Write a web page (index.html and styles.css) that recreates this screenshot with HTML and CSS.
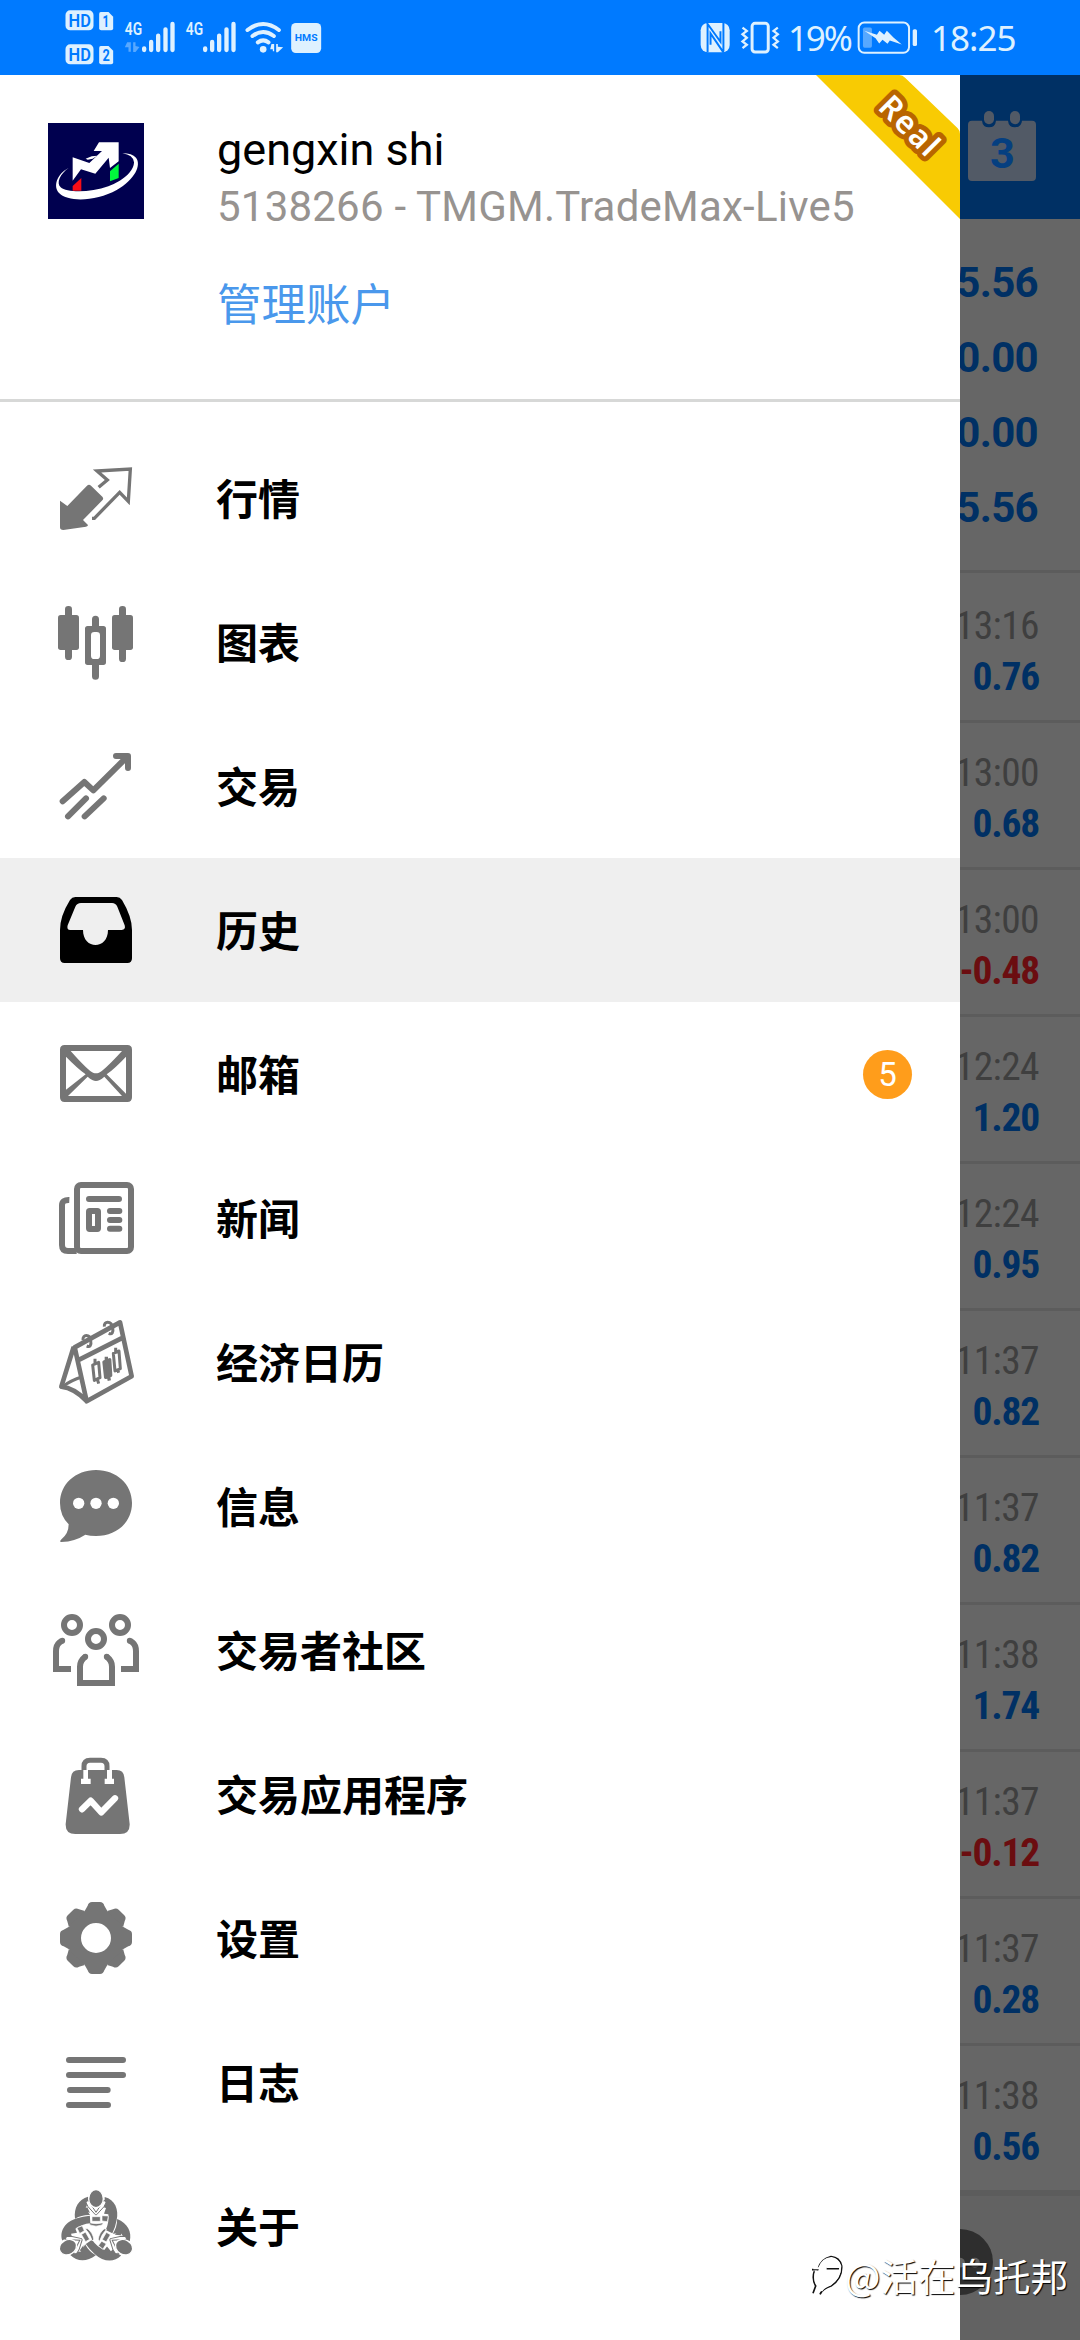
FILE: index.html
```
<!DOCTYPE html>
<html lang="zh-CN">
<head>
<meta charset="utf-8">
<title>历史</title>
<link rel="stylesheet" href="styles.css">
</head>
<body>
<div class="screen">
  <header class="status">
    <svg class="status-left" viewBox="60 0 800 225">
      <g fill="#def1ff">
        <rect x="76" y="31" width="84" height="60" rx="14"/><path d="M182 36H205L219 50V85Q219 91 213 91H183Q177 91 177 85V42Q177 36 182 36Z"/>
        <rect x="76" y="133" width="84" height="60" rx="14"/><path d="M182 138H205L219 152V187Q219 193 213 193H183Q177 193 177 187V144Q177 138 182 138Z"/>
        <text x="254" y="106" class="st net" textLength="52" lengthAdjust="spacingAndGlyphs">4G</text>
        <text x="437" y="106" class="st net" textLength="52" lengthAdjust="spacingAndGlyphs">4G</text>
        <path d="M694 132L690 148H698V154H702V132ZM708 132H713V140L729 142L713 157H708Z"/>
        <circle cx="669" cy="148" r="10"/>
        <rect x="753" y="69" width="90" height="90" rx="14"/>
      </g>
      <g fill="#007aff">
        <text x="85" y="81" class="st hd" textLength="67" lengthAdjust="spacingAndGlyphs">HD</text>
        <text x="187" y="81" class="st num" textLength="20" lengthAdjust="spacingAndGlyphs">1</text>
        <text x="85" y="183" class="st hd" textLength="67" lengthAdjust="spacingAndGlyphs">HD</text>
        <text x="187" y="183" class="st num" textLength="22" lengthAdjust="spacingAndGlyphs">2</text>
        <text x="764" y="123" class="st hms" textLength="68" lengthAdjust="spacingAndGlyphs">HMS</text>
      </g>
      <path d="M261 127L254 142H265V155H272V127ZM279 127H286V138L298 141L286 156H279Z" fill="#58a8ff"/>
      <g stroke="#def1ff" stroke-width="13" stroke-linecap="round" fill="none">
        <path d="M312 145V150M333 126V150M354 107V150M376 88V150M397 72V150"/>
        <path d="M495 145V150M516 126V150M537 107V150M559 88V150M580 72V150"/>
        <path d="M622 90Q669 54 716 90M637 108Q669 84 701 108M653 127Q669 115 685 127" stroke-width="12"/>
      </g>
    </svg>
    <div class="status-right">
      <svg class="nfc" viewBox="60 60 94 100">
        <rect x="62" y="66" width="88" height="89" rx="22" fill="#def1ff"/>
        <path d="M81 66L122 123V91M131 155L92 98V132M83 70V155M131 66V152" stroke="#007aff" stroke-width="6" fill="none"/>
      </svg>
      <svg class="vibrate" viewBox="180 60 120 100" fill="none" stroke="#def1ff" stroke-width="7">
        <rect x="216" y="67" width="49" height="87" rx="9" stroke-width="9"/>
        <path d="M187 80L200 90L187 100L200 111L187 122L200 132L187 142M294 80L281 90L294 100L281 111L294 122L281 132L294 142"/>
      </svg>
      <span class="pct">19%</span>
      <svg class="battery" viewBox="534 60 184 104">
        <rect x="539" y="67" width="152" height="91" rx="17" fill="none" stroke="#def1ff" stroke-width="6"/>
        <rect x="552" y="82" width="27" height="61" rx="5" fill="#57a8ff"/>
        <rect x="702" y="87" width="13" height="51" rx="5" fill="#def1ff"/>
        <path d="M556 92L594 104L602 92L616 104L624 92L644 112L669 133L633 121L626 131L611 119L601 130L590 114Z" fill="#def1ff"/>
      </svg>
      <span class="clock">18:25</span>
    </div>
  </header>

  <div class="main">
    <aside class="drawer">
      <section class="account">
        <svg class="avatar" viewBox="144 99 288 288">
          <rect x="144" y="99" width="288" height="288" fill="#00004f"/>
          <path d="M206 234C170 252 158 290 178 310C205 337 290 334 350 300C405 268 425 225 408 203Q396 190 367 190Q400 195 402 217C402 245 365 275 325 289C270 309 200 308 182 292C168 278 180 252 206 234Z" fill="#fff"/>
          <path d="M218 302V288L244 264V302Z" fill="#f80d16"/>
          <path d="M330 274V244L356 221V264Z" fill="#00f73c"/>
          <path d="M218 202L268 219L306 183H281L297 157H356V214L330 234L326 203L286 251L243 238L218 272Z" fill="#fff"/>
          <path d="M257 206L275 199L292 197L278 206L263 209Z" fill="#fff"/>
        </svg>
        <div class="who">
          <div class="name">gengxin shi</div>
          <div class="login">5138266 - TMGM.TradeMax-Live5</div>
          <a class="manage">管理账户</a>
        </div>
        <svg class="ribbon" viewBox="405 225 435 432">
          <path d="M408 225H658Q668 225 676 234L833 385Q840 392 840 402V657Z" fill="#f8cb03"/>
          <text class="real" transform="translate(590 325) rotate(45)" textLength="212">Real</text>
        </svg>
      </section>

      <nav class="menu">
        <a class="item"><svg class="icon" viewBox="144 30 288 288"><path d="M180 182L202 198L261 137Q267 132 273 137L307 170Q312 176 307 181L249 240L264 255Q264 259 258 260L190 270Q180 270 180 262Z" fill="#757575"/><path d="M296 142L322 120L291 93L391 87L385 184L359 157L283 235H276" fill="none" stroke="#757575" stroke-width="10"/></svg><span>行情</span></a>
        <a class="item"><svg class="icon" viewBox="144 462 288 288" fill="#757575"><rect x="174" y="525" width="63" height="105" rx="8"/><rect x="195" y="498" width="21" height="162" rx="10"/><rect x="336" y="525" width="63" height="105" rx="8"/><rect x="357" y="498" width="21" height="168" rx="10"/><path d="M276 558V538a10.500 10.500 0 0 1 21 0V558H310Q318 558 318 566V667Q318 675 310 675H297V709a10.500 10.500 0 0 1-21 0V675H263Q255 675 255 667V566Q255 558 263 558ZM283 576Q273 576 273 586V647Q273 657 283 657H290Q300 657 300 647V586Q300 576 290 576Z" fill-rule="evenodd"/></svg><span>图表</span></a>
        <a class="item"><svg class="icon" viewBox="144 894 288 288" fill="none" stroke="#757575" stroke-width="18" stroke-linecap="round" stroke-linejoin="round"><path d="M188 1084L253 1026L280 1051L381 951M348 948H384V984"/><path d="M204 1129L258 1075M254 1129L311 1075"/></svg><span>交易</span></a>
        <a class="item active"><svg class="icon" viewBox="144 96 288 288"><path d="M226 141H350Q360 141 366 150Q396 200 396 240V325Q396 339 382 339H194Q180 339 180 325V240Q180 198 210 150Q216 141 226 141ZM243 159Q231 159 226 170L203 226Q199 240 211 240H249C249 300 324 300 324 240H365Q378 239 374 226L352 170Q347 159 336 159Z" fill-rule="evenodd"/></svg><span>历史</span></a>
        <a class="item"><svg class="icon" viewBox="144 528 288 288"><path d="M194 585H382Q396 585 396 599V742Q396 756 382 756H194Q180 756 180 742V599Q180 585 194 585ZM212 603Q265 663 281 669Q288 671 295 669Q311 663 366 603ZM198 620V719L257 673Q232 655 198 620ZM378 620Q345 655 320 673L378 731ZM313 680Q298 693 288 693Q278 693 263 680L204 738H366Z" fill="#757575" fill-rule="evenodd"/></svg><span>邮箱</span><b class="badge">5</b></a>
        <a class="item"><svg class="icon" viewBox="144 960 288 288" fill="none" stroke="#757575" stroke-width="18"><rect x="231" y="1005" width="162" height="198" rx="12"/><path d="M208 1050Q186 1049 186 1066V1185Q186 1203 204 1203H230"/><path d="M267 1047H357M330 1083H358M330 1110H358M330 1136H358" stroke-linecap="round"/><rect x="267" y="1083" width="27" height="54" rx="2"/></svg><span>新闻</span></a>
        <a class="item"><svg class="icon" viewBox="144 132 288 288" fill="none" stroke="#757575" stroke-width="14" stroke-linejoin="round"><path d="M224 232L360 157L395 319L260 394ZM238 269L370 202M221 231L184 350Q222 354 260 393"/><path d="M187 350Q215 330 245 321" stroke-width="9"/><path d="M249 210C247 192 270 192 272 211C275 226 270 232 260 228M313 170C311 152 334 152 338 172C341 188 336 194 326 190" stroke-width="9"/><path d="M278 285L296 277L300 323L283 331ZM285 282V266M292 327L296 341M340 250L357 243L361 296L345 303ZM347 247V233M353 299L356 308" stroke-width="9"/><path d="M312 276L329 269L332 316L317 322ZM319 276V260M325 316L328 332" fill="#757575" stroke-width="10"/></svg><span>经济日历</span></a>
        <a class="item"><svg class="icon" viewBox="144 564 288 288"><path d="M288 600C350 600 396 643 396 699C396 757 350 798 288 798Q270 798 256 794Q226 814 184 816Q177 816 183 809Q206 792 206 763Q180 737 180 699C180 643 226 600 288 600Z" fill="#757575"/><g fill="#fff"><circle cx="236" cy="700" r="17"/><circle cx="288" cy="700" r="17"/><circle cx="340" cy="700" r="17"/></g></svg><span>信息</span></a>
        <a class="item"><svg class="icon" viewBox="144 96 288 288" fill="none" stroke="#757575" stroke-width="18"><circle cx="216" cy="165" r="24"/><circle cx="360" cy="165" r="24"/><circle cx="288" cy="207" r="24"/><path d="M213 297H168V244Q168 226 178 218L186 212M363 297H408V244Q408 226 398 218L390 212M256 260Q240 272 240 290V339H336V290Q336 272 320 260"/><g fill="#757575" stroke="none"><circle cx="187" cy="212" r="8.500"/><circle cx="389" cy="212" r="8.500"/><circle cx="256" cy="260" r="8.500"/><circle cx="320" cy="260" r="8.500"/></g></svg><span>交易者社区</span></a>
        <a class="item"><svg class="icon" viewBox="144 528 288 288"><path d="M237 600H350Q371 600 373 622L389 762Q390 792 360 792H226Q196 792 197 762L213 622Q215 600 237 600Z" fill="#757575"/><path d="M252 602V589Q252 571 270 571H303Q321 571 321 589V602" fill="none" stroke="#757575" stroke-width="15"/><path d="M250 600H264V626H272V642H243V626H250ZM321 600H336V626H342V642H314V626H321Z" fill="#fff"/><path d="M246 718L272 692L304 727L345 685" fill="none" stroke="#fff" stroke-width="19" stroke-linecap="round" stroke-linejoin="round"/></svg><span>交易应用程序</span></a>
        <a class="item"><svg class="icon" viewBox="-144 -144 288 288" fill="#757575"><defs><path id="tooth" d="M-34 -81L-25 -97Q-22 -108 -12 -108H12Q22 -108 25 -97L34 -81Z"/></defs><circle r="66" fill="none" stroke="#757575" stroke-width="42"/><use href="#tooth"/><use href="#tooth" transform="rotate(45)"/><use href="#tooth" transform="rotate(90)"/><use href="#tooth" transform="rotate(135)"/><use href="#tooth" transform="rotate(180)"/><use href="#tooth" transform="rotate(225)"/><use href="#tooth" transform="rotate(270)"/><use href="#tooth" transform="rotate(315)"/></svg><span>设置</span></a>
        <a class="item"><svg class="icon" viewBox="144 492 288 288" stroke="#757575" stroke-width="18" stroke-linecap="round"><path d="M207 570H369M207 615H369M210 660H323M207 705H324"/></svg><span>日志</span></a>
        <a class="item"><svg class="icon" viewBox="144 924 288 288" fill="#757575"><defs><g id="trader"><path d="M264 980C236 988 221 1012 225 1046Q246 1034 270 1035L264 1026L270 1029L262 1012L257 1014L266 994Z"/><path d="M314 981C345 988 357 1020 350 1050Q346 1072 337 1090L317 1080Q328 1058 325 1033L312 1031L318 1014L311 1012L314 996Z"/><path d="M258 998L264 990L288 1027L312 990L318 998L312 1010L290 1034H286L264 1010Z" fill="#fff" stroke="#757575" stroke-width="3"/><ellipse cx="288" cy="986" rx="22" ry="27" stroke="#fff" stroke-width="4"/><path d="M276 1040H301V1054H276ZM268 1058Q288 1064 310 1058L306 1065Q288 1072 270 1065ZM306 1037L325 1038L322 1055L306 1053Z" stroke="#fff" stroke-width="2"/></g></defs><use href="#trader"/><use href="#trader" transform="rotate(120 288 1083)"/><use href="#trader" transform="rotate(240 288 1083)"/></svg><span>关于</span></a>
      </nav>
    </aside>

    <section class="history">
      <div class="bar">
        <svg class="calendar" viewBox="864 330 204 213"><path d="M876 362H906Q908 382 927 382Q946 382 948 362H984Q986 382 1005 382Q1024 382 1026 362H1056Q1068 362 1068 374V531Q1068 543 1056 543H876Q864 543 864 531V374Q864 362 876 362Z" fill="#525a66"/><rect x="912" y="333" width="30" height="40" rx="15" fill="#525a66"/><rect x="990" y="333" width="30" height="40" rx="15" fill="#525a66"/><text x="967" y="505" class="day">3</text></svg>
      </div>
      <div class="summary"><b>5.56</b><b>0.00</b><b>0.00</b><b>5.56</b></div>
      <div class="deals">
        <div class="deal"><span>13:16</span><b>0.76</b></div>
        <div class="deal"><span>13:00</span><b>0.68</b></div>
        <div class="deal"><span>13:00</span><b class="loss">-0.48</b></div>
        <div class="deal"><span>12:24</span><b>1.20</b></div>
        <div class="deal"><span>12:24</span><b>0.95</b></div>
        <div class="deal"><span>11:37</span><b>0.82</b></div>
        <div class="deal"><span>11:37</span><b>0.82</b></div>
        <div class="deal"><span>11:38</span><b>1.74</b></div>
        <div class="deal"><span>11:37</span><b class="loss">-0.12</b></div>
        <div class="deal"><span>11:37</span><b>0.28</b></div>
        <div class="deal"><span>11:38</span><b>0.56</b></div>
      </div>
      <div class="tabs"><svg class="chat" viewBox="540 296 100 200"><circle cx="540" cy="396" r="100" fill="#2e2e2e"/><circle cx="540" cy="398" r="15" fill="#626262"/><circle cx="585" cy="398" r="15" fill="#626262"/></svg></div>
    </section>
  </div>

  <div class="watermark">
    <svg class="mark" viewBox="84 396 108 126" fill="none"><g stroke="#111" stroke-width="5"><path d="M93 443H110Q120 410 150 404Q176 406 182 432Q184 470 150 492Q125 500 117 517M137 440H182M100 448Q92 470 104 492L96 514"/></g><path d="M97 439H114Q124 410 151 408Q172 412 178 432Q178 466 148 488Q127 496 121 507M137 435H178M106 446Q98 470 108 488" stroke="#fff" stroke-width="6"/></svg>
    <span>@活在乌托邦</span>
  </div>
</div>
</body>
</html>
```
FILE: styles.css
```
* { box-sizing: border-box; }
body { margin: 0; background: #fff; font-family: Roboto, "Noto Sans CJK SC", sans-serif; }
svg { display: block; flex: none; }
.screen { position: relative; width: 1080px; height: 2340px; overflow: hidden; display: flex; flex-direction: column; }

/* status bar */
.status { height: 75px; background: #007aff; display: flex; justify-content: space-between; padding: 0 64px 0 60px; color: #def1ff; }
.status-left { width: 267px; height: 75px; }
.st { font-family: Roboto, sans-serif; font-weight: 600; }
.hd { font-size: 54px; }
.num { font-weight: 700; font-size: 50px; }
.net { font-size: 54px; }
.hms { font-size: 29px; font-weight: 700; }
.status-right { display: flex; align-items: center; width: 316px; font-family: "Noto Sans", sans-serif; line-height: 75px; }
.nfc { width: 31px; height: 33px; }
.vibrate { width: 40px; height: 33px; margin-left: 9px; }
.pct { width: 64px; margin-left: 8px; font-size: 35px; letter-spacing: -2.2px; white-space: nowrap; }
.battery { width: 61px; height: 35px; margin-left: 5px; }
.clock { margin-left: 13px; font-size: 35px; letter-spacing: -1px; }

.main { flex: 1; display: flex; min-height: 0; }
.drawer { width: 960px; background: #fff; display: flex; flex-direction: column; }

/* account header */
.account { position: relative; height: 327px; border-bottom: 3px solid #d7d8d7; padding: 48px 0 0 48px; display: flex; }
.avatar { width: 96px; height: 96px; }
.who { margin-left: 73px; display: flex; flex-direction: column; align-items: flex-start; white-space: nowrap; }
.name { font-size: 45px; line-height: 54px; color: #000; }
.login { font-size: 42px; line-height: 60px; letter-spacing: 0.22px; color: #979390; }
.manage { margin-top: 37px; font-size: 44.5px; line-height: 64px; color: #4a98ec; }
.ribbon { position: absolute; top: 0; right: 0; width: 145px; height: 144px; }
.real { font-family: "Noto Sans", sans-serif; font-weight: 600; font-size: 94px; fill: #fff; stroke: #b96500; stroke-width: 30px; stroke-linejoin: round; paint-order: stroke; }

/* menu */
.menu { padding-top: 24px; display: flex; flex-direction: column; }
.item { height: 144px; display: flex; align-items: center; padding: 0 48px; font-size: 42px; font-weight: 700; color: #000; }
.item span { margin-left: 72px; padding-top: 6px; line-height: 60px; }
.active { background: #efefef; }
.icon { width: 96px; height: 96px; }
.badge { margin-left: auto; width: 49px; height: 49px; border-radius: 50%; background: #ff9d1b; color: #fff; font-size: 33px; font-weight: 400; line-height: 49px; text-align: center; }

/* dimmed history page */
.history { width: 120px; background: #666; overflow: hidden; display: flex; flex-direction: column; }
.bar { height: 144px; background: #003064; padding: 35px 0 0 8px; }
.calendar { width: 68px; height: 71px; }
.day { font-size: 130px; font-weight: 700; text-anchor: middle; fill: #053f80; }
.summary { height: 354px; padding: 26px 42px 0 0; border-bottom: 3px solid #5c5c5c; display: flex; flex-direction: column; align-items: flex-end; color: #003064; font-size: 42px; letter-spacing: -0.7px; }
.summary b { line-height: 75px; }
.deals { padding-top: 3px; border-bottom: 3px solid #5c5c5c; }
.deal { height: 147px; padding: 24px 41px 0 0; border-bottom: 3px solid #5c5c5c; display: flex; flex-direction: column; align-items: flex-end; font-family: "Roboto Condensed", Roboto, sans-serif; font-stretch: 75%; font-size: 39.5px; line-height: 51px; letter-spacing: -0.6px; color: #3f3f3f; white-space: nowrap; }
.deal b { color: #003064; letter-spacing: -1.2px; }
.deal .loss { color: #6b0d10; }
.tabs { flex: 1; background: #626262; padding-top: 33px; }
.chat { width: 33px; height: 66px; }

.watermark { position: absolute; left: 809px; top: 2247px; display: flex; align-items: center; color: #fff; font: 400 37.5px/56px "Noto Sans CJK SC", sans-serif; text-shadow: 1px 1px 1px #000; white-space: nowrap; }
.mark { width: 36px; height: 42px; }
```
